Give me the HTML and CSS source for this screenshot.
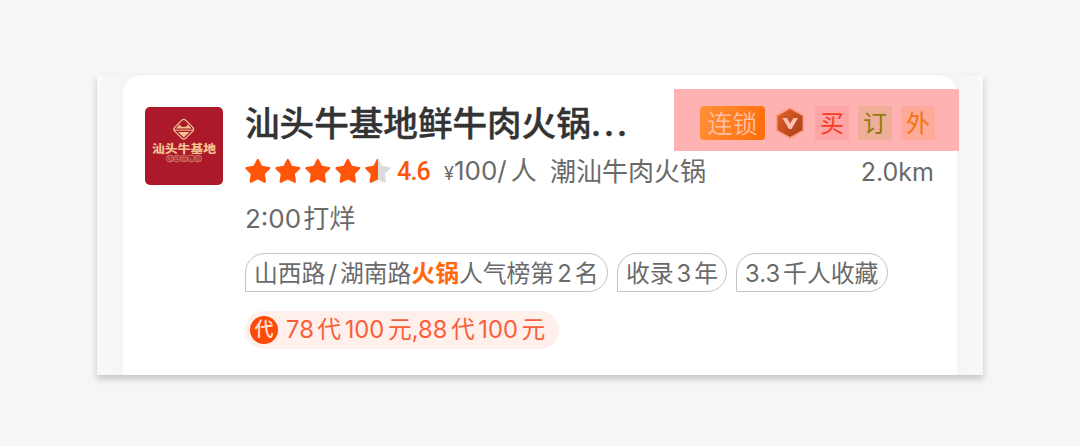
FILE: index.html
```
<!DOCTYPE html>
<html lang="zh-CN">
<head>
  <meta charset="UTF-8">
  <meta name="viewport" content="width=device-width, initial-scale=1.0">
  <title>汕头牛基地鲜牛肉火锅</title>
  <link rel="stylesheet" href="styles.css">
</head>
<body>
  <svg width="0" height="0" class="defs">
    <defs>
      <path id="star" d="M11.800 1.500 Q12.800 0 13.800 1.500 L17 7.700 L24.300 8.900 Q26 9.500 25 10.900 L19.900 16.100 L21 23.500 Q21 25.200 19.300 24.700 L12.800 21.500 L6.300 24.700 Q4.600 25.200 4.600 23.500 L5.700 16.100 L0.600 10.900 Q-.4 9.500 1.300 8.900 L8.600 7.700 Z"/>
      <clipPath id="half"><rect x="0" y="0" width="13" height="27"/></clipPath>
      <linearGradient id="hex" x1="0" y1="0" x2="1" y2="1">
        <stop offset="0" stop-color="#e0622e"/>
        <stop offset="1" stop-color="#a83d16"/>
      </linearGradient>
    </defs>
  </svg>
  <div class="frame">
    <article class="card">
      <svg class="logo" width="78" height="78" viewBox="0 0 78 78">
        <rect width="78" height="78" rx="5" fill="#ab192b"/>
        <rect x="31" y="14.500" width="15.500" height="15.500" rx="3" transform="rotate(45 38.750 22.250)" fill="none" stroke="#f3c08f" stroke-width="1.300"/>
        <path d="M31 21.500 L35 17 Q34.500 20 38.800 20 Q43 20 42.500 17 L46.500 21.500 Z M33 25 H44.500 L38.800 30.500 Z" fill="#f3c08f"/>
        <path d="M29 23.200 H48.500" stroke="#f3c08f" stroke-width="1"/>
        <text class="logo-name" x="39" y="45.500" text-anchor="middle" textLength="64" lengthAdjust="spacingAndGlyphs">汕头牛基地</text>
        <g fill="none" stroke="#d88a72" stroke-width=".8">
          <circle cx="25" cy="51.500" r="3.500"/>
          <circle cx="32" cy="51.500" r="3.500"/>
          <circle cx="39" cy="51.500" r="3.500"/>
          <circle cx="46" cy="51.500" r="3.500"/>
          <circle cx="53" cy="51.500" r="3.500"/>
        </g>
        <text class="logo-sub" x="39" y="53.500" text-anchor="middle" textLength="33">鲜牛肉火锅</text>
      </svg>
      <div class="content">
        <header class="head">
          <h1 class="title">汕头牛基地鲜牛肉火锅<span class="dots">...</span></h1>
          <div class="badges">
            <span class="chain">连锁</span>
            <svg class="vip" width="30" height="34" viewBox="0 0 30 34">
              <path d="M15 1 L29 9 V25 L15 33 L1 25 V9 Z" fill="#ff9c80"/>
              <path d="M15 3 L27.500 10 V24 L15 31 L2.500 24 V10 Z" fill="url(#hex)"/>
              <path d="M7.500 12 H12 L15 17.500 L18.500 12 H23 L16.500 23 H14 Z" fill="#ffc0b4"/>
            </svg>
            <span class="badge buy">买</span>
            <span class="badge book">订</span>
            <span class="badge takeout">外</span>
          </div>
        </header>
        <div class="meta">
          <svg class="stars" width="147" height="28" viewBox="0 0 147 28">
            <g fill="#ff5509">
              <use href="#star"/>
              <use href="#star" x="30"/>
              <use href="#star" x="60"/>
              <use href="#star" x="90"/>
            </g>
            <g transform="translate(120 0)">
              <use href="#star" fill="#dcdcdc"/>
              <use href="#star" fill="#ff5509" clip-path="url(#half)"/>
            </g>
          </svg>
          <span class="score">4.6</span>
          <span class="price"><small>¥</small><span class="amount">100/</span>人</span>
          <span class="category">潮汕牛肉火锅</span>
          <span class="distance">2.0km</span>
        </div>
        <div class="hours"><span class="time">2:00</span>打烊</div>
        <div class="tags">
          <span class="tag rank">山西路<i>/</i>湖南路<b>火锅</b>人气榜第<i>2</i>名</span>
          <span class="tag years">收录<i>3</i>年</span>
          <span class="tag saved"><span class="count">3.3</span>千人收藏</span>
        </div>
        <div class="coupon">
          <span class="coupon-icon">代</span>
          <span class="coupon-text"><span class="num">78</span>代<span class="num">100</span>元,<span class="num">88</span>代<span class="num">100</span>元</span>
        </div>
      </div>
    </article>
  </div>
</body>
</html>
```
FILE: styles.css
```
* {
  box-sizing: border-box;
}

body {
  margin: 0;
  height: 446px;
  padding: 75px 97px 0;
  background: #f6f6f6;
  font-family: Inter, "Noto Sans CJK SC", sans-serif;
  color: #6a6a6a;
  overflow: hidden;
}

.defs {
  display: block;
}

.frame {
  width: 886px;
  height: 299.500px;
  padding: 0 26px;
  background: linear-gradient(90deg, #f9f9f9, #f5f5f5 26px, #f5f5f5 860px, #f9f9f9);
  box-shadow: 0 4px 7px rgba(0, 0, 0, 0.2);
}

.card {
  display: flex;
  height: 100%;
  padding: 14.400px 0 0 22px;
  background: #fff;
  border-radius: 20px 20px 0 0;
}

.logo {
  flex: none;
  margin: 17.200px 22px 0 0;
}

.logo-name {
  font-size: 11px;
  font-weight: 900;
  fill: #f3c08f;
}

.logo-sub {
  font-size: 5.500px;
  fill: #d88a72;
}

.content {
  flex: 1;
  min-width: 0;
}

.head {
  display: flex;
  justify-content: space-between;
  height: 62px;
  margin-right: -2px;
}

.title {
  margin: 0;
  font-size: 34.600px;
  font-weight: 500;
  line-height: 68px;
  color: #333;
  white-space: nowrap;
  -webkit-text-stroke: 0.400px #333;
}

.dots {
  letter-spacing: 2.500px;
}

.badges {
  display: flex;
  align-items: center;
  width: 285px;
  padding: 5px 0 0 26px;
  background: #ffb2b2;
}

.chain {
  width: 65px;
  height: 34px;
  margin-right: 10px;
  border-radius: 4px;
  background: linear-gradient(110deg, #ff9138, #ff6c08);
  color: #ffc0a8;
  font-size: 25px;
  font-weight: 350;
  line-height: 36px;
  text-align: center;
}

.vip {
  margin-right: 10px;
}

.badge {
  width: 34px;
  height: 34px;
  margin-right: 9px;
  font-size: 24px;
  line-height: 36px;
  text-align: center;
}

.buy {
  background: #ffa5a5;
  color: #f83a20;
}

.book {
  background: #eeae98;
  color: #8d7c14;
}

.takeout {
  background: #ffaa98;
  color: #f3720c;
}

.meta {
  display: flex;
  align-items: center;
  height: 42px;
  padding-right: 23px;
  font-size: 26px;
  line-height: 42px;
  white-space: nowrap;
}

.stars {
  margin-right: 5px;
}

.score {
  width: 47px;
  color: #ff5509;
  font-family: Roboto, sans-serif;
  font-size: 25px;
  font-weight: 500;
  letter-spacing: -0.800px;
}

.price {
  width: 106px;
  line-height: 44px;
}

.price small {
  font-size: 18px;
}

.amount {
  margin-right: 4px;
}

.distance {
  margin-left: auto;
  font-size: 25px;
}

.hours {
  height: 50px;
  font-size: 26px;
  line-height: 51px;
}

.time {
  margin-right: 2px;
}

.tags {
  display: flex;
  gap: 9px;
  margin-top: 9.600px;
}

.tag {
  height: 39px;
  padding-left: 8px;
  border: 1px solid #c4c4c4;
  border-radius: 20px 20px 20px 0;
  font-size: 23.800px;
  line-height: 39px;
  white-space: nowrap;
}

.tag i {
  padding: 0 3px;
  font-style: normal;
}

.tag b {
  color: #ff6a0c;
  font-weight: 700;
}

.rank {
  width: 363px;
}

.years {
  width: 110px;
}

.saved {
  width: 152px;
}

.count {
  margin-right: 3px;
}

.coupon {
  display: flex;
  align-items: center;
  width: 314px;
  height: 38px;
  margin-top: 19px;
  padding-left: 5px;
  border-radius: 19px;
  background: #fff0ec;
  color: #f95f3a;
  font-size: 23.800px;
  line-height: 38px;
  white-space: nowrap;
}

.coupon-text {
  height: 38px;
}

.num {
  margin: 0 3.500px;
}

.num:first-child,
.num:nth-child(3) {
  margin-left: 0;
}

.coupon-icon {
  width: 28px;
  height: 28px;
  margin-right: 8px;
  border-radius: 50%;
  background: #fb4a0c;
  color: #ffe0d2;
  font-size: 19px;
  font-weight: 500;
  line-height: 27px;
  text-align: center;
}
```
